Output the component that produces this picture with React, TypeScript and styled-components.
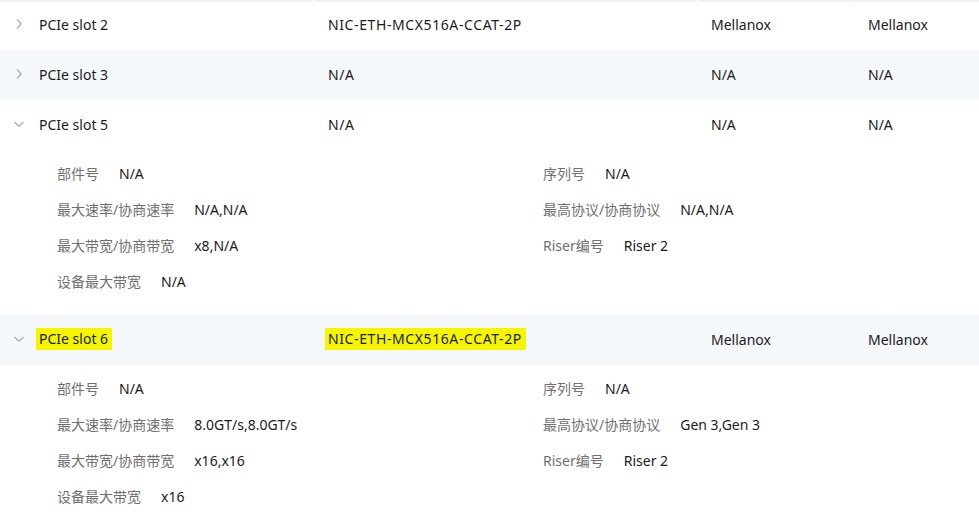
import React from "react";
import styled, { createGlobalStyle } from "styled-components";

const GlobalStyle = createGlobalStyle`
  html, body {
    margin: 0;
    padding: 0;
    background: #fff;
  }
  body {
    font-family: "Noto Sans", "Noto Sans CJK SC", sans-serif;
    font-size: 14px;
    color: #1b1b1b;
  }
`;

type Detail = { label: string; value: string };

type Slot = {
  name: string;
  model: string;
  vendor: string;
  maker: string;
  open?: boolean;
  marked?: boolean;
  left?: Detail[];
  right?: Detail[];
};

const slots: Slot[] = [
  { name: "PCIe slot 2", model: "NIC-ETH-MCX516A-CCAT-2P", vendor: "Mellanox", maker: "Mellanox" },
  { name: "PCIe slot 3", model: "N/A", vendor: "N/A", maker: "N/A" },
  {
    name: "PCIe slot 5",
    model: "N/A",
    vendor: "N/A",
    maker: "N/A",
    open: true,
    left: [
      { label: "部件号", value: "N/A" },
      { label: "最大速率/协商速率", value: "N/A,N/A" },
      { label: "最大带宽/协商带宽", value: "x8,N/A" },
      { label: "设备最大带宽", value: "N/A" },
    ],
    right: [
      { label: "序列号", value: "N/A" },
      { label: "最高协议/协商协议", value: "N/A,N/A" },
      { label: "Riser编号", value: "Riser 2" },
    ],
  },
  {
    name: "PCIe slot 6",
    model: "NIC-ETH-MCX516A-CCAT-2P",
    vendor: "Mellanox",
    maker: "Mellanox",
    open: true,
    marked: true,
    left: [
      { label: "部件号", value: "N/A" },
      { label: "最大速率/协商速率", value: "8.0GT/s,8.0GT/s" },
      { label: "最大带宽/协商带宽", value: "x16,x16" },
      { label: "设备最大带宽", value: "x16" },
    ],
    right: [
      { label: "序列号", value: "N/A" },
      { label: "最高协议/协商协议", value: "Gen 3,Gen 3" },
      { label: "Riser编号", value: "Riser 2" },
    ],
  },
];

const COLS = "312px 383px 157px 1fr";

const Table = styled.div`
  width: 979px;
  display: flex;
  flex-direction: column;
`;

const HeadLine = styled.div`
  display: grid;
  grid-template-columns: ${COLS};
  column-gap: 1px;
  height: 2px;
`;

const HeadCell = styled.div`
  background: #f0f0f0;
`;

const Row = styled.div<{ $shaded: boolean }>`
  display: grid;
  grid-template-columns: ${COLS};
  height: 50px;
  padding-bottom: 2px;
  box-sizing: border-box;
  align-items: center;
  background: ${(p) => (p.$shaded ? "#f5f8fb" : "#fff")};
`;

const FirstRow = styled(Row)`
  height: 48px;
  padding-bottom: 4px;
`;

const Cell = styled.div`
  display: flex;
  align-items: center;
  padding-left: 16px;
  white-space: nowrap;
`;

const NameCell = styled(Cell)`
  padding-left: 12px;
`;

const ModelCell = styled(Cell)`
  letter-spacing: 0.6px;
`;

const Toggle = styled.span`
  width: 14px;
  height: 14px;
  margin-right: 13px;
  display: inline-flex;
  align-items: center;
  justify-content: center;
  color: #a8a8a8;
`;

const Mark = styled.span<{ $on?: boolean }>`
  background: ${(p) => (p.$on ? "#f5f500" : "transparent")};
  padding: ${(p) => (p.$on ? "1px 4px 2px 3px" : "0")};
  margin-left: ${(p) => (p.$on ? "-3px" : "0")};
`;

const Expand = styled.div`
  display: grid;
  grid-template-columns: 486px 1fr;
  padding: 6px 0 15px 57px;
  background: #fff;
`;

const DetailCol = styled.div`
  display: flex;
  flex-direction: column;
`;

const DetailLine = styled.div`
  height: 36px;
  box-sizing: border-box;
  padding-bottom: 2px;
  display: flex;
  align-items: center;
  gap: 20px;
  white-space: nowrap;
`;

const Label = styled.span`
  color: #707070;
`;

const Value = styled.span`
  color: #1b1b1b;
`;

const Chevron = ({ open }: { open?: boolean }) => (
  <svg width="14" height="14" viewBox="0 0 14 14" fill="none" stroke="currentColor" strokeWidth="1.2">
    {open ? <path d="M2.5 5 L7 9.2 L11.5 5" /> : <path d="M5 2.5 L9.2 7 L5 11.5" />}
  </svg>
);

const Details = ({ items }: { items: Detail[] }) => (
  <DetailCol>
    {items.map((d) => (
      <DetailLine key={d.label}>
        <Label>{d.label}</Label>
        <Value>{d.value}</Value>
      </DetailLine>
    ))}
  </DetailCol>
);

export default function App() {
  return (
    <>
      <GlobalStyle />
      <Table>
        <HeadLine>
          <HeadCell />
          <HeadCell />
          <HeadCell />
          <HeadCell />
        </HeadLine>
        {slots.map((s, i) => {
          const R = i === 0 ? FirstRow : Row;
          return (
            <React.Fragment key={s.name}>
              <R $shaded={i % 2 === 1}>
                <NameCell>
                  <Toggle>
                    <Chevron open={s.open} />
                  </Toggle>
                  <Mark $on={s.marked}>{s.name}</Mark>
                </NameCell>
                <ModelCell>
                  <Mark $on={s.marked}>{s.model}</Mark>
                </ModelCell>
                <Cell>{s.vendor}</Cell>
                <Cell>{s.maker}</Cell>
              </R>
              {s.open && s.left && s.right && (
                <Expand>
                  <Details items={s.left} />
                  <Details items={s.right} />
                </Expand>
              )}
            </React.Fragment>
          );
        })}
      </Table>
    </>
  );
}
